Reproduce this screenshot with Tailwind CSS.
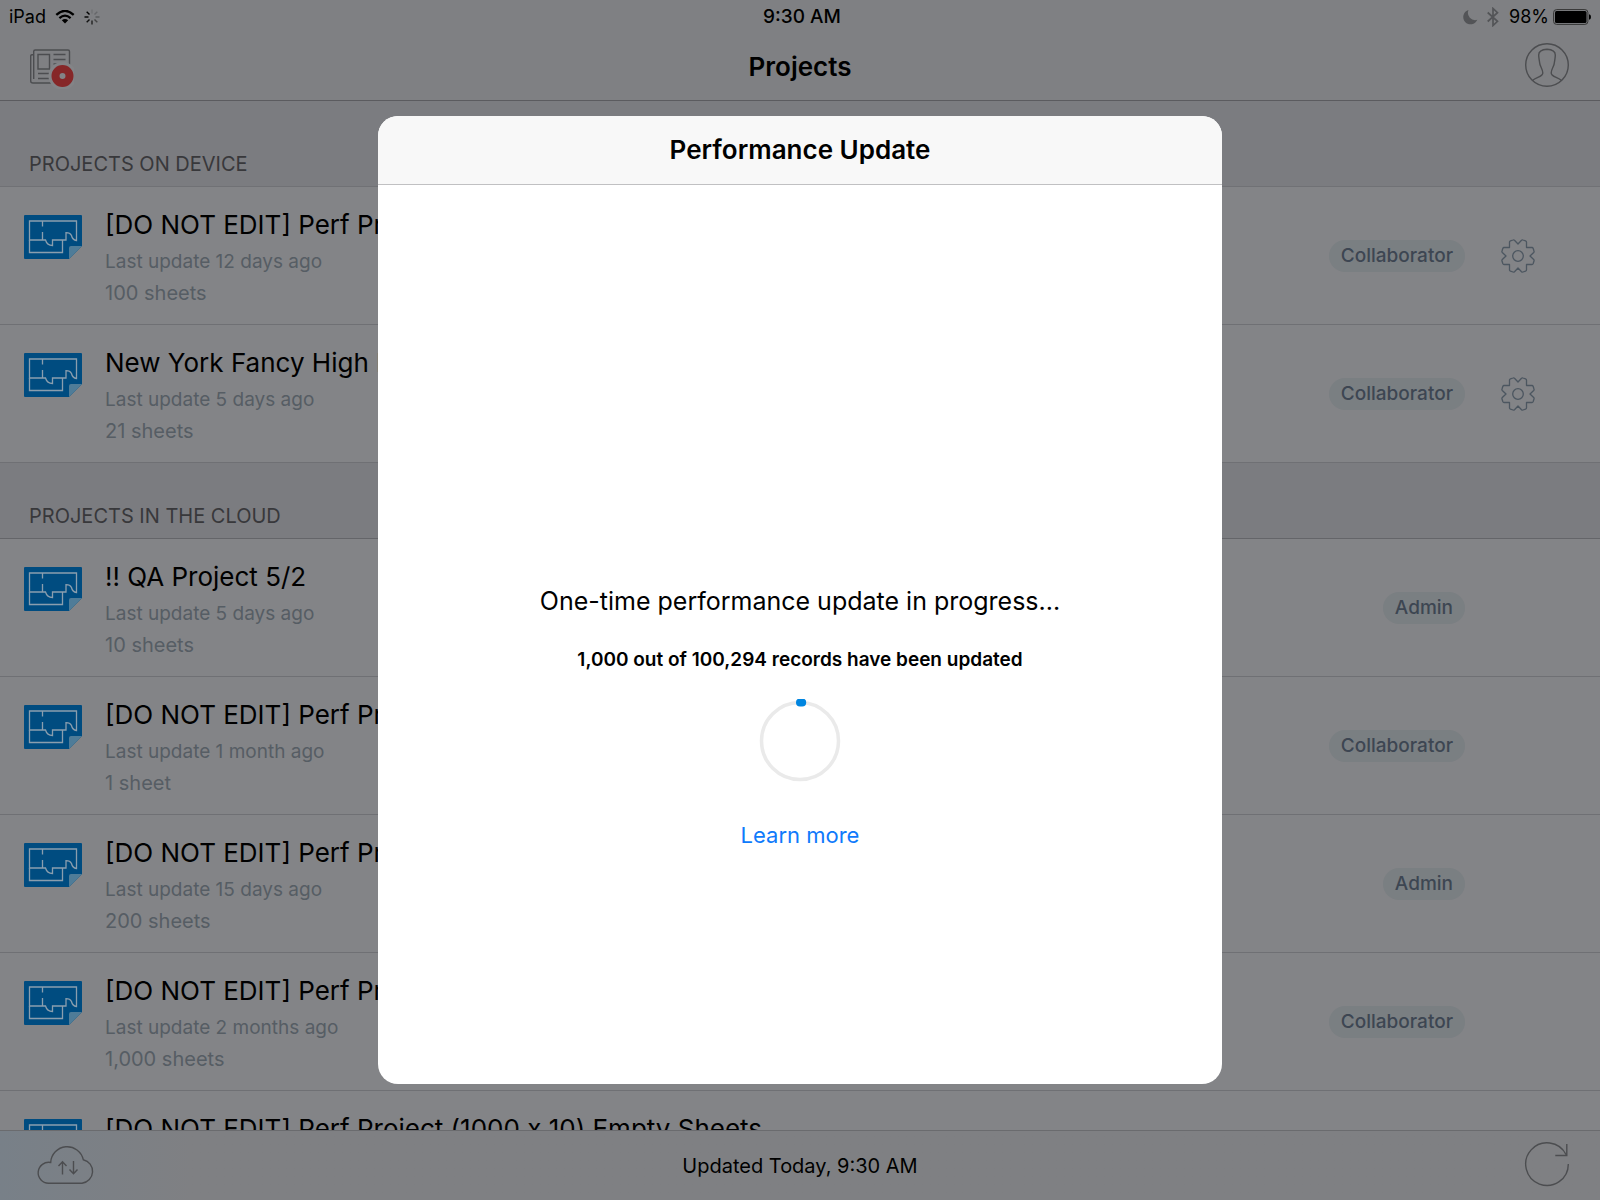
<!DOCTYPE html>
<html lang="en">
<head>
<meta charset="utf-8">
<meta name="viewport" content="width=device-width, initial-scale=1">
<title>Projects</title>
<script src="https://cdn.jsdelivr.net/npm/@tailwindcss/browser@4"></script>
</head>
<body class="relative flex h-screen flex-col overflow-hidden bg-[#838487] font-['Inter',sans-serif] text-black">

<svg class="hidden" aria-hidden="true">
  <symbol id="sheet" viewBox="0 0 58 44">
    <path d="M1 0H57a1 1 0 0 1 1 1V31L45 44H1a1 1 0 0 1-1-1V1a1 1 0 0 1 1-1Z" fill="#004c80"/>
    <path d="M45 44V33a2 2 0 0 1 2-2H58Z" fill="#4f7c98"/>
    <g fill="none" stroke="#8a9eae" stroke-width="1.3">
      <path d="M5.500 6H52.500V25.500C49.500 25 48 23 47.500 20.500C46.500 18.500 45 17.700 42 17.700V25H28.500V30.500C25 30.500 22.500 28.500 21.500 25H5.500Z"/>
      <path d="M5.500 25V37.500H38.500V25M18.500 6V11.500M18.500 17V25"/>
    </g>
  </symbol>
  <symbol id="gear" viewBox="-17 -17 34 34">
    <g fill="none" stroke="#4c5660" stroke-width="1.3" stroke-linejoin="round">
      <path d="M0-12L3.500-15.700Q4.200-16.300 5-16L7.500-15.200Q8.500-14.800 8.500-14V-8.500H14Q14.800-8.500 15.200-7.500L16-5Q16.300-4.200 15.700-3.500L12 0L15.700 3.500Q16.300 4.200 16 5L15.200 7.500Q14.800 8.500 14 8.500H8.500V14Q8.500 14.800 7.500 15.200L5 16Q4.200 16.300 3.500 15.700L0 12L-3.500 15.700Q-4.200 16.300-5 16L-7.500 15.200Q-8.500 14.800-8.500 14V8.500H-14Q-14.800 8.500-15.200 7.500L-16 5Q-16.300 4.200-15.700 3.500L-12 0L-15.700-3.500Q-16.300-4.200-16-5L-15.200-7.500Q-14.800-8.500-14-8.500H-8.500V-14Q-8.500-14.800-7.500-15.200L-5-16Q-4.200-16.300-3.500-15.700Z"/>
      <circle r="5.300"/>
    </g>
  </symbol>
</svg>

<header class="h-[101px] shrink-0 border-b border-[#5b5b5f] bg-[#7f8083]">
  <div class="grid h-[33px] grid-cols-3 items-center pr-[9px] pl-[9px] text-lg leading-8">
    <div class="flex items-center gap-[9px]">
      <span>iPad</span>
      <svg class="h-[14px] w-5" viewBox="0 0 20 14" fill="none" stroke="#000" stroke-width="2.300" aria-label="Wi-Fi"><path d="M1.300 4.800Q10-3 18.700 4.800M4.400 8.100Q10 3.200 15.600 8.100"/><path d="M10 13.500L6.800 10.300Q10 7.700 13.200 10.300Z" fill="#000" stroke="none"/></svg>
      <svg class="size-4" viewBox="-8 -8 16 16" stroke-width="1.400" aria-label="Loading"><path d="M0 3.500V7.500" stroke="#222"/><path d="M-2.500 2.500L-5.300 5.300" stroke="#111"/><path d="M-3.500 0H-7.500" stroke="#000"/><path d="M-2.500-2.500L-5.300-5.300" stroke="#000"/><path d="M0-3.500V-7.500" stroke="#707174"/><path d="M2.500-2.500L5.300-5.300" stroke="#66676a"/><path d="M3.500 0H7.500" stroke="#58595c"/><path d="M2.500 2.500L5.300 5.300" stroke="#444"/></svg>
    </div>
    <time class="pl-1 text-center text-[19px] font-medium">9:30 AM</time>
    <div class="flex items-center justify-end">
      <svg class="mr-[9px] h-4 w-[15px]" viewBox="0 0 15 16" aria-label="Do not disturb"><path d="M5.500 1A7.300 7.300 0 1 0 14.300 10.800A7.300 7.300 0 0 1 5.500 1Z" fill="#535457"/></svg>
      <svg class="mr-[10px] h-5 w-3" viewBox="0 0 12 20" fill="none" stroke="#535457" stroke-width="1.700" aria-label="Bluetooth"><path d="M.7 5.500L10.500 14.300L6 18.500V1.500L10.500 5.700L.7 14.500"/></svg>
      <span>98%</span>
      <svg class="ml-[4px] h-4 w-[38px]" viewBox="0 0 38 16" aria-label="Battery"><rect x=".6" y=".6" width="34.300" height="14.800" rx="3" fill="none" stroke="#333"/><rect x="2" y="2" width="31.500" height="12" rx="1.500"/><path d="M36 5.200Q38 5.500 38 8T36 10.800Z"/></svg>
    </div>
  </div>
  <div class="grid h-[67px] grid-cols-3 items-center px-[30px]">
    <button type="button" aria-label="News" class="size-11 justify-self-start">
      <svg viewBox="0 0 44 44" class="size-11" fill="none" stroke="#4c4d50" stroke-width="1.400">
        <path d="M3.700 34V6.500Q3.700 5 5.200 5H38Q39.500 5 39.500 6.500V37Q39.500 38 38 38H3Q.7 38 .7 36V11Q.7 9.500 3.700 9.500M8 9.500H19.500V24H8ZM23.500 9.500H35.500M23.500 14.500H35.500M23.500 19H35.500M8 28.500H19.500M8 33.500H19.500"/>
        <circle cx="32.500" cy="31" r="14" fill="#838487" stroke="none"/><circle cx="32.500" cy="31" r="7" stroke="#862728" stroke-width="8"/>
      </svg>
    </button>
    <h1 class="text-center text-[26px] leading-8 font-semibold">Projects</h1>
    <button type="button" aria-label="Account" class="mb-1 size-[46px] justify-self-end">
      <svg viewBox="-23 -23 46 46" class="size-[46px]" fill="none" stroke="#4c4d50" stroke-width="1.400"><circle r="21.300"/><path d="M-14.500 15.500C-11 12-4.200 12-4.200 8C-4.200 4-7.300 1-7.300-2C-8-6-8.300-8-8.300-10C-8.300-14-5-15.500 0-15.800C5-15.500 8.300-14 8.300-10C8.300-8 8-6 7.300-2C7.300 1 4.200 4 4.200 8C4.200 12 11 12 14.500 15.500"/></svg>
    </button>
  </div>
</header>

<main class="min-h-0 flex-1 overflow-hidden">
  <section>
    <h2 class="flex h-[86px] items-end border-b border-[#707175] bg-[#7b7c80] pb-[10px] pl-[29px] text-xl leading-6 text-[#38383b]">PROJECTS ON DEVICE</h2>
    <ul>
      <li class="flex h-[138px] border-b border-[#6f7074] pr-[65px] pl-6">
        <svg class="mt-7 h-11 w-[58px] shrink-0"><use href="#sheet"/></svg>
        <div class="ml-[23px] min-w-0 flex-1 pt-[22px] text-[#565d64]">
          <h3 class="mb-[6px] truncate text-[26px] leading-8 text-black">[DO NOT EDIT] Perf Project</h3>
          <p class="text-[19px] leading-[30px]">Last update 12 days ago</p>
          <p class="text-xl leading-8">100 sheets</p>
        </div>
        <span class="mr-9 self-center rounded-full bg-[#7a7f82] px-3 text-[19px] leading-8 font-medium text-[#3d4652]">Collaborator</span>
        <button type="button" aria-label="Project settings" class="size-[34px] self-center"><svg class="size-[34px]"><use href="#gear"/></svg></button>
      </li>
      <li class="flex h-[138px] border-b border-[#6f7074] pr-[65px] pl-6">
        <svg class="mt-7 h-11 w-[58px] shrink-0"><use href="#sheet"/></svg>
        <div class="ml-[23px] min-w-0 flex-1 pt-[22px] text-[#565d64]">
          <h3 class="mb-[6px] truncate text-[26px] leading-8 text-black">New York Fancy High Rise</h3>
          <p class="text-[19px] leading-[30px]">Last update 5 days ago</p>
          <p class="text-xl leading-8">21 sheets</p>
        </div>
        <span class="mr-9 self-center rounded-full bg-[#7a7f82] px-3 text-[19px] leading-8 font-medium text-[#3d4652]">Collaborator</span>
        <button type="button" aria-label="Project settings" class="size-[34px] self-center"><svg class="size-[34px]"><use href="#gear"/></svg></button>
      </li>
    </ul>
  </section>
  <section>
    <h2 class="flex h-[76px] items-end border-b border-[#646569] bg-[#7b7c80] pb-[10px] pl-[29px] text-xl leading-6 text-[#38383b]">PROJECTS IN THE CLOUD</h2>
    <ul>
      <li class="flex h-[138px] border-b border-[#6f7074] pr-[135px] pl-6">
        <svg class="mt-7 h-11 w-[58px] shrink-0"><use href="#sheet"/></svg>
        <div class="ml-[23px] min-w-0 flex-1 pt-[22px] text-[#565d64]">
          <h3 class="mb-[6px] truncate text-[26px] leading-8 text-black">!! QA Project 5/2</h3>
          <p class="text-[19px] leading-[30px]">Last update 5 days ago</p>
          <p class="text-xl leading-8">10 sheets</p>
        </div>
        <span class="self-center rounded-full bg-[#7a7f82] px-3 text-[19px] leading-8 font-medium text-[#3d4652]">Admin</span>
      </li>
      <li class="flex h-[138px] border-b border-[#6f7074] pr-[135px] pl-6">
        <svg class="mt-7 h-11 w-[58px] shrink-0"><use href="#sheet"/></svg>
        <div class="ml-[23px] min-w-0 flex-1 pt-[22px] text-[#565d64]">
          <h3 class="mb-[6px] truncate text-[26px] leading-8 text-black">[DO NOT EDIT] Perf Project</h3>
          <p class="text-[19px] leading-[30px]">Last update 1 month ago</p>
          <p class="text-xl leading-8">1 sheet</p>
        </div>
        <span class="self-center rounded-full bg-[#7a7f82] px-3 text-[19px] leading-8 font-medium text-[#3d4652]">Collaborator</span>
      </li>
      <li class="flex h-[138px] border-b border-[#6f7074] pr-[135px] pl-6">
        <svg class="mt-7 h-11 w-[58px] shrink-0"><use href="#sheet"/></svg>
        <div class="ml-[23px] min-w-0 flex-1 pt-[22px] text-[#565d64]">
          <h3 class="mb-[6px] truncate text-[26px] leading-8 text-black">[DO NOT EDIT] Perf Project</h3>
          <p class="text-[19px] leading-[30px]">Last update 15 days ago</p>
          <p class="text-xl leading-8">200 sheets</p>
        </div>
        <span class="self-center rounded-full bg-[#7a7f82] px-3 text-[19px] leading-8 font-medium text-[#3d4652]">Admin</span>
      </li>
      <li class="flex h-[138px] border-b border-[#6f7074] pr-[135px] pl-6">
        <svg class="mt-7 h-11 w-[58px] shrink-0"><use href="#sheet"/></svg>
        <div class="ml-[23px] min-w-0 flex-1 pt-[22px] text-[#565d64]">
          <h3 class="mb-[6px] truncate text-[26px] leading-8 text-black">[DO NOT EDIT] Perf Project</h3>
          <p class="text-[19px] leading-[30px]">Last update 2 months ago</p>
          <p class="text-xl leading-8">1,000 sheets</p>
        </div>
        <span class="self-center rounded-full bg-[#7a7f82] px-3 text-[19px] leading-8 font-medium text-[#3d4652]">Collaborator</span>
      </li>
      <li class="flex h-[138px] pr-[135px] pl-6">
        <svg class="mt-7 h-11 w-[58px] shrink-0"><use href="#sheet"/></svg>
        <div class="ml-[23px] min-w-0 flex-1 pt-[22px] text-[#565d64]">
          <h3 class="mb-[6px] truncate text-[26px] leading-8 text-black [font-feature-settings:'calt'_0]">[DO NOT EDIT] Perf Project (1000 x 10) Empty Sheets</h3>
        </div>
      </li>
    </ul>
  </section>
</main>

<footer class="grid h-[70px] shrink-0 grid-cols-3 items-center border-t border-[#6a6b6e] bg-linear-to-r from-[#788088] to-[#7f8083] to-12% px-[30px]">
  <button type="button" aria-label="Sync" class="mb-[3px] ml-[7px] h-10 w-[58px] justify-self-start">
    <svg viewBox="0 0 58 40" class="h-10 w-[58px]" fill="none" stroke="#4c4d50" stroke-width="1.400"><path d="M11.500 39.300A10.500 10.500 0 1 1 13.700 18.500A16.500 16.500 0 0 1 46.300 15.700A12 12 0 0 1 45 39.300ZM25.500 30.500V18M21.500 22L25.500 17.700L29.500 22M36.500 17V29.500M32.500 25.500L36.500 29.800L40.500 25.500"/></svg>
  </button>
  <p class="text-center text-xl leading-6">Updated Today, 9:30 AM</p>
  <button type="button" aria-label="Refresh" class="mb-[3px] size-[46px] justify-self-end">
    <svg viewBox="-23 -23 46 46" class="size-[46px]" fill="none" stroke="#4c4d50" stroke-width="1.400"><path d="M21.300 0A21.300 21.300 0 1 1 19-9.500M19.800-20V-8.500H8.300"/></svg>
  </button>
</footer>

<div class="absolute inset-0 flex items-center justify-center">
  <div role="dialog" aria-labelledby="dialog-title" class="flex h-[968px] max-h-full w-[844px] max-w-full flex-col overflow-hidden rounded-[20px] bg-white">
    <h2 id="dialog-title" class="border-b border-[#c0c0c2] bg-[#f8f8f8] py-[18px] text-center text-[26px] leading-8 font-semibold">Performance Update</h2>
    <div class="flex flex-1 flex-col items-center pt-[400px] text-center">
      <p class="text-[25px] leading-8">One-time performance update in progress...</p>
      <p class="mt-[31px] text-[19px] leading-6 font-semibold">1,000 out of 100,294 records have been updated</p>
      <svg viewBox="-42 -42 84 84" class="mt-[27px] size-[84px]" fill="none" role="img" aria-label="Progress 1%"><circle r="38.500" stroke="#eaeaea" stroke-width="3.500"/><path d="M0-38.500H2.200" stroke="#0085e0" stroke-width="8" stroke-linecap="round"/></svg>
      <a href="#" class="mt-9 text-[22px] leading-8 text-[#0f7afb]">Learn more</a>
    </div>
  </div>
</div>
</body>
</html>
